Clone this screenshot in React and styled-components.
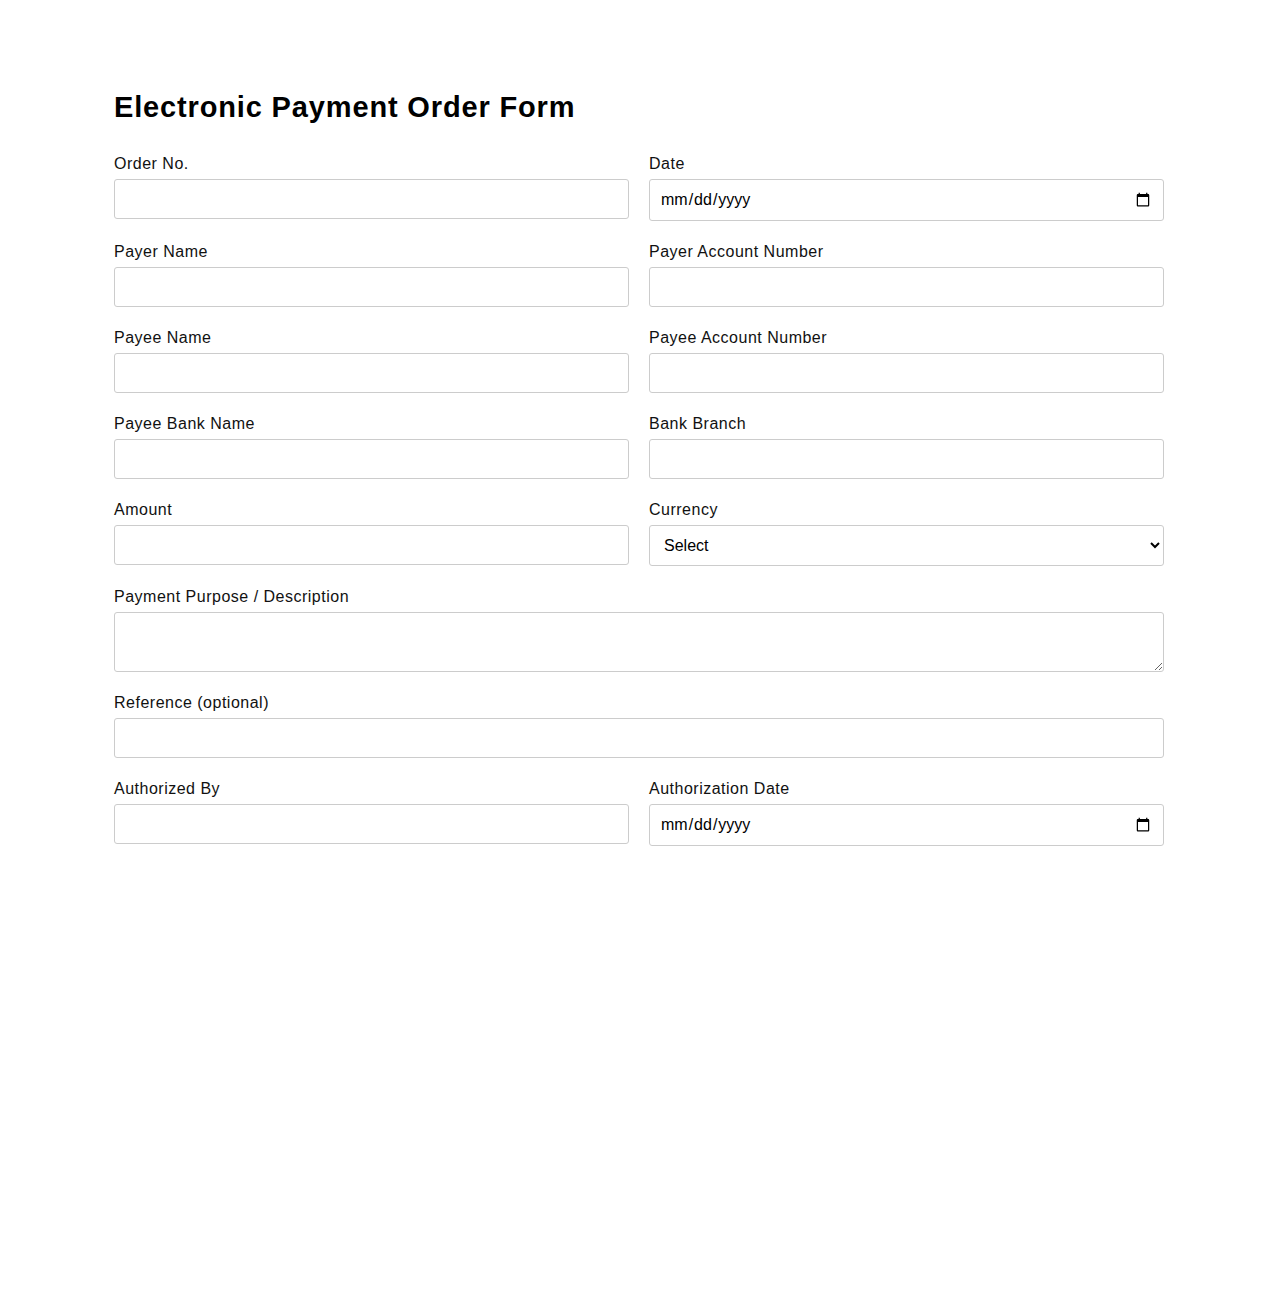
import React from "react";
import styled, { createGlobalStyle } from "styled-components";

const GlobalStyle = createGlobalStyle`
  body {
    margin: 0;
    background: #fff;
    font-family: "Liberation Sans", Arial, sans-serif;
    color: #111;
  }
`;

const Page = styled.div`
  max-width: 1050px;
  margin: 0 auto;
  padding: 91px 0 40px;
`;

const Title = styled.h1`
  margin: 0 0 31px;
  font-size: 29px;
  font-weight: bold;
  letter-spacing: 0.85px;
  color: #000;
`;

const Row = styled.div`
  display: grid;
  grid-template-columns: ${(p) => (p.$full ? "1fr" : "1fr 1fr")};
  column-gap: 20px;
  margin-bottom: 22px;
`;

const Field = styled.div`
  display: flex;
  flex-direction: column;
`;

const Label = styled.label`
  font-size: 16px;
  letter-spacing: 0.5px;
  color: #111;
  margin-bottom: 6px;
`;

const Input = styled.input`
  box-sizing: border-box;
  width: 100%;
  padding: 10px;
  font-size: 16px;
  font-family: "Liberation Sans", Arial, sans-serif;
  border: 1px solid #ccc;
  border-radius: 3px;
  color: #000;
`;

const Select = styled.select`
  box-sizing: border-box;
  width: 100%;
  padding: 10px;
  font-size: 16px;
  font-family: "Liberation Sans", Arial, sans-serif;
  border: 1px solid #ccc;
  border-radius: 3px;
  background: #fff;
  color: #000;
`;

const TextArea = styled.textarea`
  box-sizing: border-box;
  width: 100%;
  height: 60px;
  padding: 10px;
  font-size: 16px;
  font-family: "Liberation Sans", Arial, sans-serif;
  border: 1px solid #ccc;
  border-radius: 3px;
`;

function TextField({ label, type = "text" }) {
  return (
    <Field>
      <Label>{label}</Label>
      <Input type={type} />
    </Field>
  );
}

export default function App() {
  return (
    <>
      <GlobalStyle />
      <Page>
        <Title>Electronic Payment Order Form</Title>
        <form>
          <Row>
            <TextField label="Order No." />
            <TextField label="Date" type="date" />
          </Row>
          <Row>
            <TextField label="Payer Name" />
            <TextField label="Payer Account Number" />
          </Row>
          <Row>
            <TextField label="Payee Name" />
            <TextField label="Payee Account Number" />
          </Row>
          <Row>
            <TextField label="Payee Bank Name" />
            <TextField label="Bank Branch" />
          </Row>
          <Row>
            <TextField label="Amount" />
            <Field>
              <Label>Currency</Label>
              <Select defaultValue="">
                <option value="">Select</option>
                <option value="USD">USD</option>
                <option value="EUR">EUR</option>
                <option value="GBP">GBP</option>
              </Select>
            </Field>
          </Row>
          <Row $full>
            <Field>
              <Label>Payment Purpose / Description</Label>
              <TextArea />
            </Field>
          </Row>
          <Row $full>
            <TextField label="Reference (optional)" />
          </Row>
          <Row>
            <TextField label="Authorized By" />
            <TextField label="Authorization Date" type="date" />
          </Row>
        </form>
      </Page>
    </>
  );
}
